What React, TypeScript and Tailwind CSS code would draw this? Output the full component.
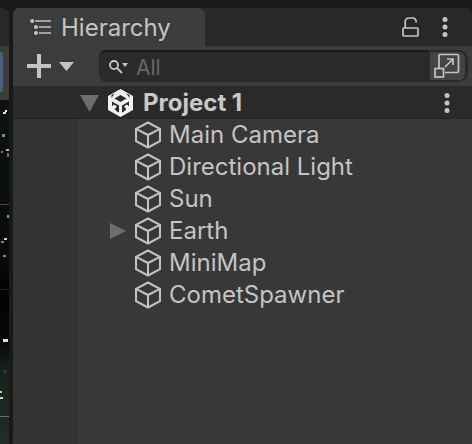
const FONT = "font-['Inter','Noto_Sans',sans-serif]";

function Cube() {
  return (
    <svg width="28" height="28" viewBox="0 0 28 28" fill="none" stroke="#c4c4c4" strokeWidth="2" strokeLinejoin="round" className="shrink-0">
      <path d="M14 1.5 L26 7.8 V20.2 L14 26.5 L2 20.2 V7.8 Z" />
      <path d="M2 7.8 L14 14 L26 7.8 M14 14 V26.5" />
    </svg>
  );
}

function UnityLogo() {
  return (
    <svg width="25" height="28" viewBox="0 0 25 28" className="shrink-0">
      <path fill="#f0f0f0" d="M12.5 0 L25 7 V21 L12.5 28 L0 21 V7 Z" />
      <path fill="#2a2a2a" d="M12.5 6 L18.5 9.5 L12.5 13 L6.5 9.5 Z" />
      <path fill="#2a2a2a" d="M3.5 6 L6.5 4.5 L3.5 9 Z M21.5 6 L18.5 4.5 L21.5 9 Z" />
      <path fill="#2a2a2a" d="M4 12.5 L11 16.5 V23.5 L9 22.5 L4 17.5 Z M21 12.5 L14 16.5 V23.5 L16 22.5 L21 17.5 Z" />
      <path fill="#f0f0f0" d="M2 19 L6 15.5 L9 17.5 L5.5 21.5 Z M23 19 L19 15.5 L16 17.5 L19.5 21.5 Z" />
    </svg>
  );
}

function Scene() {
  const dots: [number, number, number, number, string][] = [
    [3, 112, 3, 2, "#dddddd"], [5, 110, 2, 2, "#f0f0f0"], [2, 134, 3, 3, "#8a8a8a"], [6, 149, 3, 2, "#9fb4bd"], [7, 153, 2, 4, "#a8582c"], [1, 151, 2, 2, "#6f7a7f"],
    [7, 215, 2, 3, "#7d9a94"], [4, 238, 3, 2, "#c8d0d0"], [1, 241, 3, 2, "#777f85"], [3, 255, 3, 2, "#b08a38"],
    [3, 339, 5, 3, "#e6dfc2"], [0, 391, 2, 2, "#c8c8c8"], [0, 397, 3, 2, "#e0d898"], [4, 370, 2, 3, "#39443c"],
  ];
  return (
    <svg width="9" height="344" viewBox="0 100 9 344" className="block">
      <defs>
        <linearGradient id="sky" x1="0" y1="0" x2="0" y2="1">
          <stop offset="0" stopColor="#0c1113" />
          <stop offset="0.45" stopColor="#070b0c" />
          <stop offset="0.55" stopColor="#020303" />
          <stop offset="0.7" stopColor="#050706" />
          <stop offset="0.78" stopColor="#17201a" />
          <stop offset="1" stopColor="#232e29" />
        </linearGradient>
      </defs>
      <rect x="0" y="100" width="9" height="344" fill="url(#sky)" />
      <path d="M0 204.5H9" stroke="#4a4a44" strokeWidth="1" />
      <path d="M0 416.5H9" stroke="#6a706c" strokeWidth="1" />
      <path d="M0 289.5H9" stroke="#1e2222" strokeWidth="1" />
      {dots.map(([x, y, w, h, c], i) => (
        <rect key={i} x={x} y={y} width={w} height={h} fill={c} />
      ))}
    </svg>
  );
}

const ITEMS = ["Main Camera", "Directional Light", "Sun", "Earth", "MiniMap", "CometSpawner"];

function Dots({ className }: { className?: string }) {
  return (
    <svg width="6" height="20" viewBox="0 0 6 20" fill="#c4c4c4" className={className}>
      <circle cx="3" cy="2.6" r="2.5" />
      <circle cx="3" cy="10" r="2.5" />
      <circle cx="3" cy="17.4" r="2.5" />
    </svg>
  );
}

export default function App() {
  return (
    <div className={`w-[472px] h-[444px] overflow-hidden flex bg-[#191919] pt-2 ${FONT}`}>
      <div className="w-[9px] shrink-0 flex flex-col">
        <div className="h-[38px] bg-[#282828] rounded-tr-md" />
        <div className="h-[54px] bg-[#3c3c3c] pt-[6px] flex flex-col">
          <div className="h-10 bg-[#4a5f85] rounded-r-[3px] w-[3px]" />
        </div>
        <Scene />
      </div>
      <div className="w-1 shrink-0 bg-[#191919]" />
      <div className="flex-1 flex flex-col min-w-0">
        <div className="h-[38px] flex bg-[#282828] rounded-t-md">
          <div className="w-[192px] bg-[#3c3c3c] rounded-t-md flex items-center gap-[9px] pl-[17px] text-[#c4c4c4] text-[24px] leading-none pt-[2px]">
            <svg width="22" height="16" viewBox="0 0 22 16" fill="none" className="shrink-0 mb-[3px]">
              <circle cx="2.2" cy="2" r="2" fill="#c4c4c4" />
              <circle cx="6" cy="8" r="2" fill="#c4c4c4" />
              <circle cx="6" cy="14" r="2" fill="#c4c4c4" />
              <path d="M5 2H21M9 8H21M9 14H21" stroke="#c4c4c4" strokeWidth="1.6" />
            </svg>
            <span>Hierarchy</span>
          </div>
          <div className="flex-1 flex items-center justify-end gap-[23px] pr-[24px]">
            <svg width="17" height="20" viewBox="0 0 17 20" fill="none" stroke="#c4c4c4" strokeWidth="1.7" className="mt-[-1px]">
              <rect x="1" y="11" width="15" height="8" rx="1" />
              <path d="M3.2 11V5 Q3.2 1 7 1 H10.5 Q14.2 1 14.2 5.5" />
            </svg>
            <Dots />
          </div>
        </div>
        <div className="h-[40px] bg-[#3c3c3c] flex items-center border-b-2 border-[#2a2a2a] box-content">
          <svg width="24" height="24" viewBox="0 0 24 24" className="ml-[14px] shrink-0" fill="#c4c4c4">
            <path d="M10 0H14V10H24V14H14V24H10V14H0V10H10Z" />
          </svg>
          <svg width="15" height="9" viewBox="0 0 15 9" className="ml-[8px] shrink-0" fill="#c4c4c4">
            <path d="M0 0H15L7.5 9Z" />
          </svg>
          <div className="ml-[25px] h-[32px] w-[329px] rounded-l-[7px] bg-[#2a2a2a] border-t-2 border-[#191919] flex items-center pl-[9px] gap-[8px] text-[#686868] text-[21px] leading-none">
            <svg width="20" height="16" viewBox="0 0 20 16" fill="none" stroke="#c4c4c4" strokeWidth="1.8" className="shrink-0">
              <circle cx="6" cy="6" r="4" />
              <path d="M9 9L14 14" />
              <path d="M14 4H20L17 8Z" fill="#c4c4c4" stroke="none" />
            </svg>
            <span>All</span>
          </div>
          <div className="h-[32px] w-[40px] rounded-r-[9px] bg-[#444444] border-l-2 border-r-[3px] border-y-2 border-[#2a2a2a] flex items-center justify-center">
            <svg width="26" height="26" viewBox="0 0 26 26" fill="none" stroke="#c4c4c4" strokeWidth="1.7" className="ml-[-2px]">
              <path d="M5 15V2.5Q5 1.5 6 1.5H23Q24.5 1.5 24.5 3V18Q24.5 19.5 23 19.5H11" />
              <rect x="1" y="15.5" width="8.5" height="8.5" />
              <path d="M11 14L19 6M13 6H19V12" />
            </svg>
          </div>
        </div>
        <div className="h-[30px] bg-[#2a2a2a] flex items-center border-b border-[#232323] box-content">
          <svg width="19" height="17" viewBox="0 0 19 17" fill="#6e6e6e" className="ml-[67px] shrink-0">
            <path d="M0 0H19L9.5 17Z" />
          </svg>
          <div className="ml-[9px]"><UnityLogo /></div>
          <span className="ml-[10px] text-[#c8c8c8] text-[24px] font-bold leading-none">Project 1</span>
          <Dots className="ml-auto mr-[22px]" />
        </div>
        <div className="flex-1 flex bg-[#383838]">
          <div className="w-[64px] shrink-0 bg-[#333333]" />
          <div className="flex-1 flex flex-col">
            {ITEMS.map((name) => (
              <div key={name} className="h-[32px] flex items-center relative pl-[57px] gap-[7px] text-[#c4c4c4] text-[24px] leading-none">
                {name === "Earth" && (
                  <svg width="16" height="16" viewBox="0 0 16 16" fill="#6e6e6e" className="absolute left-[33px] top-[8px]">
                    <path d="M0 0L16 8L0 16Z" />
                  </svg>
                )}
                <Cube />
                <span>{name}</span>
              </div>
            ))}
          </div>
        </div>
      </div>
    </div>
  );
}
